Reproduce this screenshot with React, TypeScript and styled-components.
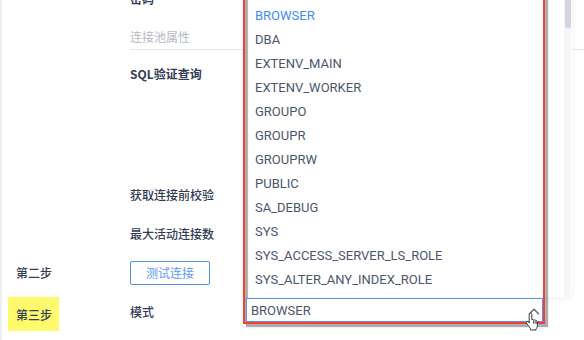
import React from "react";
import styled, { createGlobalStyle } from "styled-components";

const Global = createGlobalStyle`
  html, body { margin: 0; padding: 0; background: #fff; }
  body { width: 584px; height: 340px; overflow: hidden; }
  * { box-sizing: border-box; }
`;

const Page = styled.div`
  position: relative;
  width: 584px;
  height: 340px;
  overflow: hidden;
  border-left: 2px solid #eceef2;
  padding-left: 6px;
  font-family: "Noto Sans CJK SC", "Noto Sans", sans-serif;
`;

const Form = styled.div`
  margin-top: -13px;
  display: flex;
  flex-direction: column;
`;

const Row = styled.div<{ $h: number; $align?: string }>`
  display: grid;
  grid-template-columns: 122px 114px 1fr;
  height: ${(p) => p.$h}px;
  align-items: ${(p) => p.$align ?? "center"};
`;

const Step = styled.div`
  padding-left: 8px;
  font-size: 12px;
  line-height: 18px;
  font-weight: 500;
  color: #333c54;
`;

const CurrentStep = styled.div`
  width: 51px;
  height: 34px;
  margin-top: 5px;
  padding-left: 8px;
  display: flex;
  align-items: center;
  background: #fff96c;
  font-size: 12px;
  font-weight: 500;
  color: #333c54;
`;

const Label = styled.div<{ $bold?: boolean; $pt?: number }>`
  font-size: 12px;
  line-height: 18px;
  font-weight: ${(p) => (p.$bold ? 700 : 500)};
  color: #333c54;
  padding-top: ${(p) => p.$pt ?? 0}px;
`;

const Section = styled.div`
  grid-column: 2 / -1;
  align-self: stretch;
  display: flex;
  align-items: flex-end;
  padding-bottom: 3px;
  border-bottom: 1px solid #e7e9ed;
  font-size: 12px;
  line-height: 18px;
  color: #b5b9c3;
`;

const TestButton = styled.button`
  width: 80px;
  height: 24px;
  padding: 0;
  background: #fff;
  border: 1px solid #4e90ea;
  border-radius: 2px;
  color: #5d9cf2;
  font-family: "Noto Sans CJK SC", sans-serif;
  font-size: 12px;
  line-height: 20px;
`;

const SelectWrap = styled.div`
  position: relative;
  margin-left: 2px;
  margin-top: 6px;
  width: 297px;
  height: 24px;
`;

const SelectBox = styled.div`
  position: relative;
  z-index: 3;
  height: 24px;
  border: 1px solid #5b93e6;
  background: #fff;
  padding-left: 4px;
  display: flex;
  align-items: center;
  font-family: Roboto, "Liberation Sans", sans-serif;
  font-size: 13px;
  color: #4b566b;
`;

const Chevron = styled.svg`
  position: absolute;
  left: 281px;
  top: 9px;
`;

const Cursor = styled.svg`
  position: absolute;
  z-index: 5;
  left: 279px;
  top: 14px;
`;

const Popup = styled.div`
  position: absolute;
  z-index: 1;
  left: -2px;
  bottom: calc(100% + 1px);
  width: 328px;
  height: 297px;
  background: #fff;
  border-radius: 0 0 4px 4px;
  box-shadow: 0 1px 6px rgba(30, 40, 60, 0.08);
  padding-top: 4px;
  overflow: hidden;
`;

const Item = styled.div<{ $active?: boolean }>`
  height: 24px;
  line-height: 24px;
  padding-left: 11px;
  font-family: Roboto, "Liberation Sans", sans-serif;
  font-size: 13px;
  color: ${(p) => (p.$active ? "#3f8cf3" : "#4b566b")};
`;

const Track = styled.div`
  position: absolute;
  top: 0;
  right: 1px;
  width: 7px;
  height: 100%;
  background: #f6f6f8;
`;

const Thumb = styled.div`
  position: absolute;
  top: 0;
  right: 1px;
  width: 6px;
  height: 28px;
  background: #d3d5dc;
  border-radius: 0 0 2px 2px;
`;

const Annotation = styled.div`
  position: absolute;
  z-index: 2;
  left: -3px;
  right: -2px;
  top: -310px;
  bottom: -2px;
  border: 2px solid #f2403a;
  box-shadow: 3px 3px 1px rgba(0, 0, 0, 0.32),
    inset 3px 3px 1px rgba(0, 0, 0, 0.32);
  pointer-events: none;
`;

const items = [
  "BROWSER",
  "DBA",
  "EXTENV_MAIN",
  "EXTENV_WORKER",
  "GROUPO",
  "GROUPR",
  "GROUPRW",
  "PUBLIC",
  "SA_DEBUG",
  "SYS",
  "SYS_ACCESS_SERVER_LS_ROLE",
  "SYS_ALTER_ANY_INDEX_ROLE",
];

export default function App() {
  return (
    <>
      <Global />
      <Page>
        <Form>
          <Row $h={24}>
            <div />
            <Label $bold>密码</Label>
          </Row>
          <Row $h={39}>
            <div />
            <Section>连接池属性</Section>
          </Row>
          <Row $h={125} $align="start">
            <div />
            <Label $bold $pt={15}>SQL验证查询</Label>
          </Row>
          <Row $h={39}>
            <div />
            <Label>获取连接前校验</Label>
          </Row>
          <Row $h={39}>
            <div />
            <Label>最大活动连接数</Label>
          </Row>
          <Row $h={39}>
            <Step>第二步</Step>
            <TestButton>测试连接</TestButton>
          </Row>
          <Row $h={40} $align="start">
            <CurrentStep>第三步</CurrentStep>
            <Label $pt={11}>模式</Label>
            <SelectWrap>
              <Popup>
                <Track />
                <Thumb />
                {items.map((it, i) => (
                  <Item key={it} $active={i === 0}>
                    {it}
                  </Item>
                ))}
              </Popup>
              <Annotation />
              <SelectBox>
                BROWSER
                <Chevron width="12" height="7" viewBox="0 0 12 7">
                  <path d="M1 6.2 L6 1.2 L11 6.2" fill="none" stroke="#56607a" strokeWidth="1.3" />
                </Chevron>
              </SelectBox>
              <Cursor width="16" height="19" viewBox="0 0 16 19">
                <path
                  d="M5.5 1.2c.8 0 1.3.6 1.3 1.3v5.2l.3-.1c.5-.2 1.2-.1 1.5.4.5-.3 1.2-.2 1.6.3.5-.3 1.3-.1 1.6.5l.3.6c.2.4.3.9.3 1.4v2.6c0 1.2-.4 2.3-1.1 3.2l-.3.5V18H5.6v-1.3L3.2 13.5c-.5-.6-1.200-1.6-1.6-2.3-.4-.6-.3-1.3.2-1.6.5-.4 1.2-.3 1.6.2l.8 1V2.5c0-.7.6-1.3 1.3-1.3z"
                  fill="#fff"
                  stroke="#222"
                  strokeWidth="0.9"
                />
                <path d="M8.6 8.5v3.2M10.2 9.2v2.6M11.8 9.8v2" stroke="#222" strokeWidth="0.8" />
              </Cursor>
            </SelectWrap>
          </Row>
        </Form>
      </Page>
    </>
  );
}
